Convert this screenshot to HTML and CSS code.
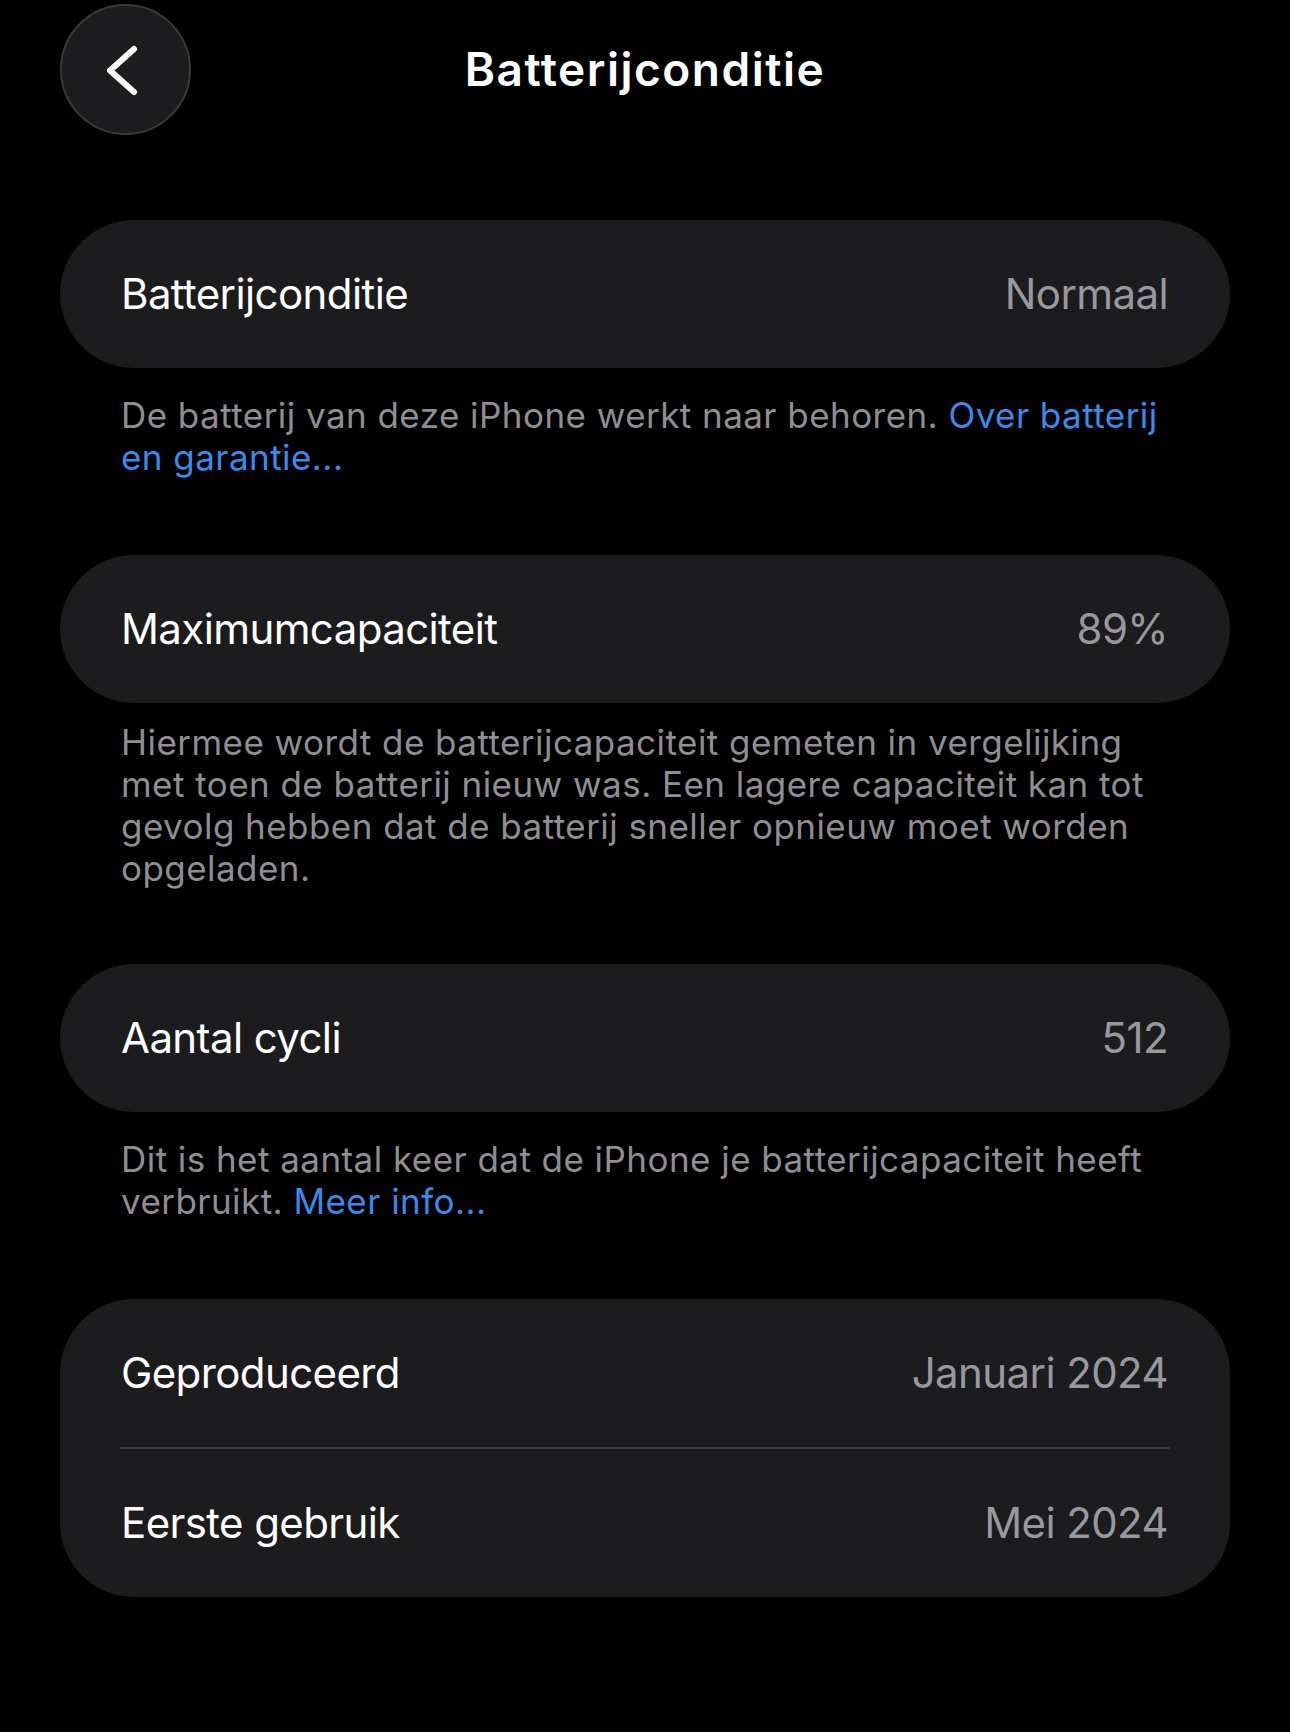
FILE: index.html
```html
<!DOCTYPE html>
<html lang="nl">
<head>
<meta charset="utf-8">
<title>Batterijconditie</title>
<link rel="stylesheet" href="styles.css">
</head>
<body>
<div class="page">
  <header class="nav">
    <button class="back" aria-label="Terug">
      <svg viewBox="0 0 131 131" width="131" height="131" aria-hidden="true">
        <path d="M74 45 L50 66.5 L74 88" fill="none" stroke="#ffffff" stroke-width="6" stroke-linecap="round" stroke-linejoin="round"/>
      </svg>
    </button>
    <h1 class="nav-title">Batterijconditie</h1>
    <span class="nav-spacer"></span>
  </header>

  <section class="group group-first">
    <div class="row">
      <span class="row-label">Batterijconditie</span>
      <span class="row-value">Normaal</span>
    </div>
  </section>
  <p class="footnote">De batterij van deze iPhone werkt naar behoren. <a class="link" href="#">Over batterij<br>en garantie...</a></p>

  <section class="group">
    <div class="row">
      <span class="row-label">Maximumcapaciteit</span>
      <span class="row-value">89%</span>
    </div>
  </section>
  <p class="footnote footnote-tight">Hiermee wordt de batterijcapaciteit gemeten in vergelijking<br>met toen de batterij nieuw was. Een lagere capaciteit kan tot<br>gevolg hebben dat de batterij sneller opnieuw moet worden<br>opgeladen.</p>

  <section class="group">
    <div class="row">
      <span class="row-label">Aantal cycli</span>
      <span class="row-value">512</span>
    </div>
  </section>
  <p class="footnote">Dit is het aantal keer dat de iPhone je batterijcapaciteit heeft<br>verbruikt. <a class="link" href="#">Meer info...</a></p>

  <section class="group">
    <div class="row">
      <span class="row-label">Geproduceerd</span>
      <span class="row-value">Januari 2024</span>
    </div>
    <div class="divider"></div>
    <div class="row">
      <span class="row-label">Eerste gebruik</span>
      <span class="row-value">Mei 2024</span>
    </div>
  </section>
</div>
</body>
</html>
```

FILE: styles.css
```css
html, body {
  margin: 0;
  padding: 0;
  background: #000000;
}

body {
  font-family: Inter, "Noto Sans", "Liberation Sans", sans-serif;
  color: #ffffff;
  -webkit-font-smoothing: antialiased;
}

.page {
  width: 1290px;
  min-height: 1732px;
  box-sizing: border-box;
  padding: 0 60px;
}

.nav {
  display: grid;
  grid-template-columns: 131px 1fr 131px;
  align-items: center;
  height: 139px;
}

.back {
  width: 131px;
  height: 131px;
  margin: 0;
  padding: 0;
  border-radius: 50%;
  border: 2px solid #3a3a3c;
  background: #1c1c1e;
  box-sizing: border-box;
  display: flex;
  align-items: center;
  justify-content: center;
  overflow: hidden;
}

.back svg {
  display: block;
  flex: none;
}

.nav-title {
  margin: 0;
  text-align: center;
  font-size: 46px;
  font-weight: 600;
  letter-spacing: 1.5px;
  line-height: 1.21;
  color: #ffffff;
}

.group {
  background: #1c1c1e;
  border-radius: 74px;
  margin-top: 77px;
  overflow: hidden;
}

.group-first {
  margin-top: 81px;
}

.row {
  height: 148px;
  box-sizing: border-box;
  padding: 0 62px 0 61px;
  display: flex;
  align-items: center;
  justify-content: space-between;
  font-size: 42px;
  letter-spacing: -0.6px;
  line-height: 1.21;
}

.row-label {
  color: #ffffff;
}

.row-value {
  color: #98989f;
}

.divider {
  height: 2px;
  margin: 0 60px;
  background: #38383a;
}

.footnote {
  margin: 26px 0 0;
  padding: 0 61px;
  font-size: 35px;
  line-height: 42px;
  letter-spacing: 0.45px;
  color: #8e8e93;
}

.footnote-tight {
  margin-top: 18px;
  margin-bottom: -2px;
}

.link {
  color: #3a8aec;
  text-decoration: none;
}
```
